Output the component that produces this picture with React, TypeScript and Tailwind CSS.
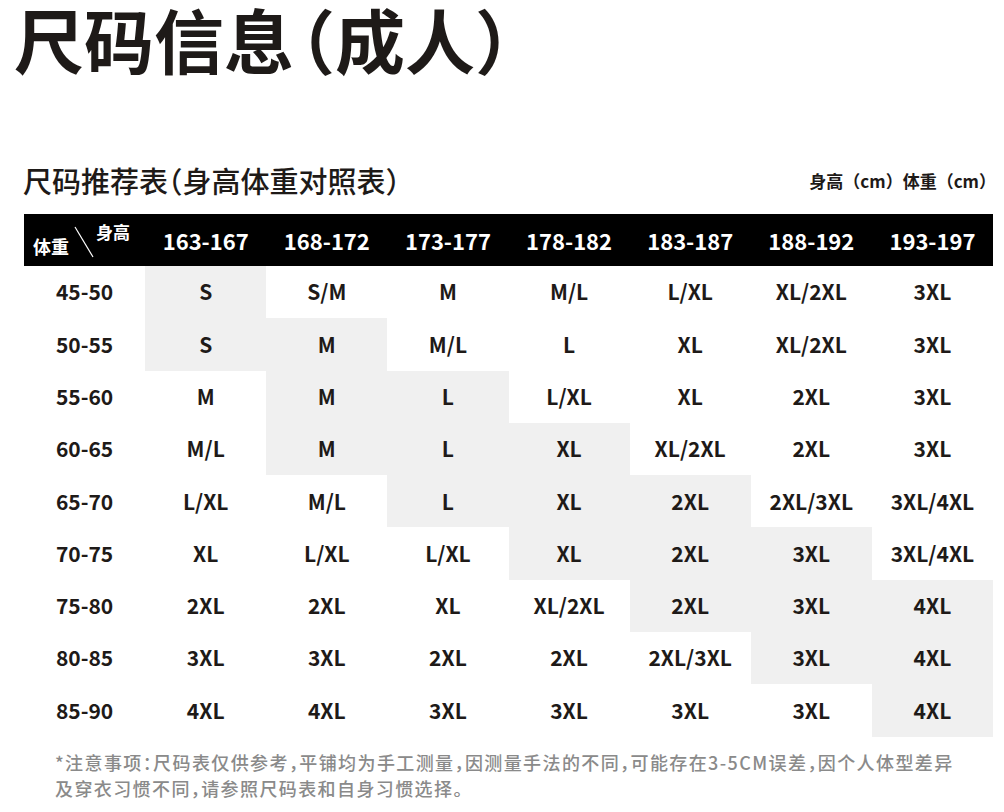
import React from "react";

const heights = ["163-167", "168-172", "173-177", "178-182", "183-187", "188-192", "193-197"];

// weight range, sizes per height column, shaded columns
const rows: { w: string; s: string[]; hl: number[] }[] = [
  { w: "45-50", s: ["S", "S/M", "M", "M/L", "L/XL", "XL/2XL", "3XL"], hl: [0] },
  { w: "50-55", s: ["S", "M", "M/L", "L", "XL", "XL/2XL", "3XL"], hl: [0, 1] },
  { w: "55-60", s: ["M", "M", "L", "L/XL", "XL", "2XL", "3XL"], hl: [1, 2] },
  { w: "60-65", s: ["M/L", "M", "L", "XL", "XL/2XL", "2XL", "3XL"], hl: [1, 2, 3] },
  { w: "65-70", s: ["L/XL", "M/L", "L", "XL", "2XL", "2XL/3XL", "3XL/4XL"], hl: [2, 3, 4] },
  { w: "70-75", s: ["XL", "L/XL", "L/XL", "XL", "2XL", "3XL", "3XL/4XL"], hl: [3, 4, 5] },
  { w: "75-80", s: ["2XL", "2XL", "XL", "XL/2XL", "2XL", "3XL", "4XL"], hl: [4, 5, 6] },
  { w: "80-85", s: ["3XL", "3XL", "2XL", "2XL", "2XL/3XL", "3XL", "4XL"], hl: [5, 6] },
  { w: "85-90", s: ["4XL", "4XL", "3XL", "3XL", "3XL", "3XL", "4XL"], hl: [6] },
];

export default function App() {
  return (
    <div className="w-[1004px] h-[812px] bg-white text-[#1e1a18] font-['Noto_Sans_CJK_SC',sans-serif] overflow-hidden">
      {/* TITLE */}
      <h1 className="pl-[14px] text-[70px] leading-[78px] font-bold [font-feature-settings:'halt']">
        尺码信息<span className="ml-[6px]">（</span>成人）
      </h1>

      {/* SUBTITLE ROW */}
      <div className="mt-[87px] ml-[23px] w-[969px] flex items-center justify-between">
        <h2 className="text-[29px] leading-[30px] font-medium [font-feature-settings:'halt']">
          尺码推荐表（身高体重对照表）
        </h2>
        <p className="text-[17px] leading-none font-bold mr-[-4px]">
          身高（cm）体重（cm）
        </p>
      </div>

      {/* TABLE */}
      <div className="mt-[19px] ml-[24px] w-[969px]">
        <div className="grid grid-cols-8 h-[52px] bg-black text-white">
          <div className="relative">
            <span className="absolute left-[9px] top-[23px] text-[18px] leading-none font-bold">体重</span>
            <svg className="absolute left-[50px] top-[12px]" width="20" height="32" viewBox="0 0 20 32">
              <line x1="1" y1="1" x2="19" y2="31" stroke="#fff" strokeWidth="1.2" />
            </svg>
            <span className="absolute left-[72px] top-[9px] text-[17px] leading-none font-bold">身高</span>
          </div>
          {heights.map((h) => (
            <div key={h} className="flex items-center justify-center text-[22px] font-bold">
              {h}
            </div>
          ))}
        </div>

        {rows.map((r) => (
          <div key={r.w} className="grid grid-cols-8 h-[52.3px]">
            <div className="flex items-center justify-center text-[21px] font-bold">{r.w}</div>
            {r.s.map((s, i) => (
              <div
                key={i}
                className={
                  r.hl.includes(i)
                    ? "flex items-center justify-center text-[21px] font-bold bg-[#f0f0f0]"
                    : "flex items-center justify-center text-[21px] font-bold"
                }
              >
                {s}
              </div>
            ))}
          </div>
        ))}
      </div>

      {/* NOTE */}
      <p className="mt-[12px] ml-[55px] w-[940px] text-[18px] leading-[26px] font-medium tracking-[1.4px] text-[#8a8a8a] [font-feature-settings:'halt']">
        *注意事项：尺码表仅供参考，平铺均为手工测量，因测量手法的不同，可能存在3-5CM误差，因个人体型差异
        <br />
        及穿衣习惯不同，请参照尺码表和自身习惯选择。
      </p>
    </div>
  );
}
